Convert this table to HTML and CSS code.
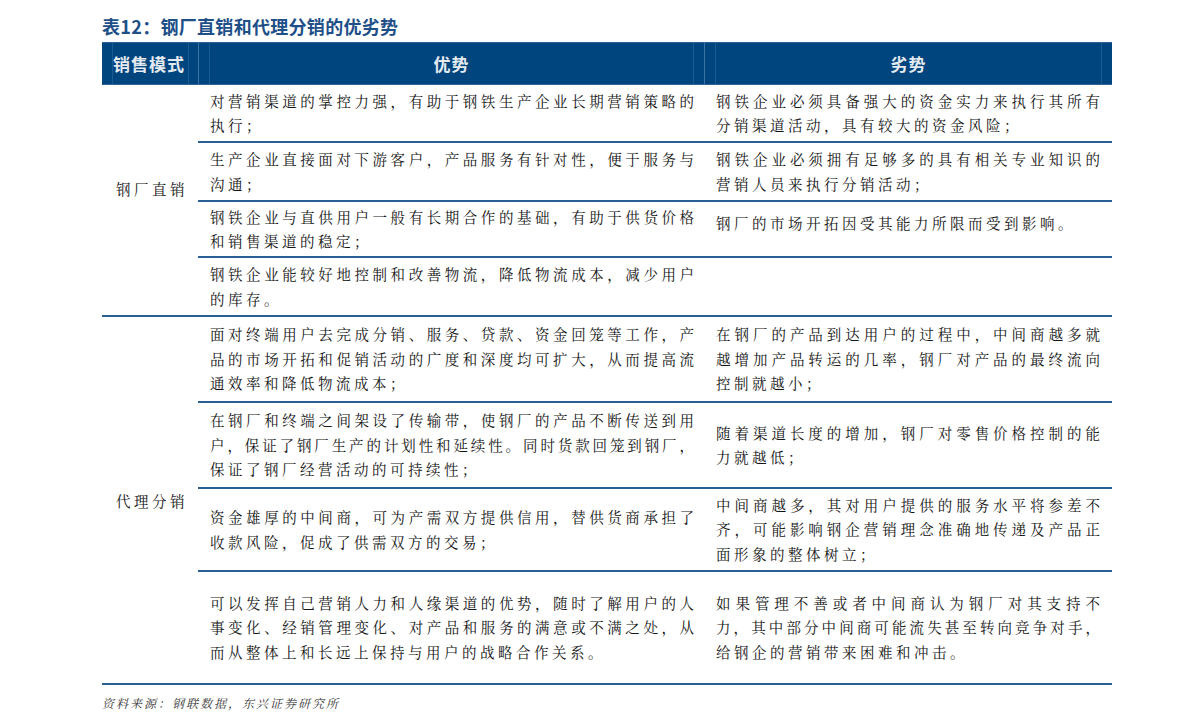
FILE: index.html
```html
<!DOCTYPE html>
<html lang="zh-CN">
<head>
<meta charset="utf-8">
<title>表12：钢厂直销和代理分销的优劣势</title>
<link rel="stylesheet" href="styles.css">
</head>
<body>
<div class="page">
  <div class="title">表12：钢厂直销和代理分销的优劣势</div>
  <div class="table">
    <div class="th th-mode"><span class="th-in">销售模式</span></div>
    <div class="th th-mid"><span class="th-in">优势</span></div>
    <div class="th th-mid"><span class="th-in">劣势</span></div>

    <div class="grp grp-1">钢厂直销</div>
    <div class="cell c2">
      <div class="f">对营销渠道的掌控力强，有助于钢铁生产企业长期营销策略的</div>
      <div class="l">执行；</div>
    </div>
    <div class="cell c3">
      <div class="f">钢铁企业必须具备强大的资金实力来执行其所有</div>
      <div class="l">分销渠道活动，具有较大的资金风险；</div>
    </div>
    <div class="cell c2">
      <div class="f">生产企业直接面对下游客户，产品服务有针对性，便于服务与</div>
      <div class="l">沟通；</div>
    </div>
    <div class="cell c3">
      <div class="f">钢铁企业必须拥有足够多的具有相关专业知识的</div>
      <div class="l">营销人员来执行分销活动；</div>
    </div>
    <div class="cell c2">
      <div class="f">钢铁企业与直供用户一般有长期合作的基础，有助于供货价格</div>
      <div class="l">和销售渠道的稳定；</div>
    </div>
    <div class="cell c3 up">
      <div class="l">钢厂的市场开拓因受其能力所限而受到影响。</div>
    </div>
    <div class="cell c2">
      <div class="f">钢铁企业能较好地控制和改善物流，降低物流成本，减少用户</div>
      <div class="l">的库存。</div>
    </div>
    <div class="cell c3"></div>

    <div class="grp grp-2">代理分销</div>
    <div class="cell c2">
      <div class="f">面对终端用户去完成分销、服务、贷款、资金回笼等工作，产</div>
      <div class="f">品的市场开拓和促销活动的广度和深度均可扩大，从而提高流</div>
      <div class="l">通效率和降低物流成本；</div>
    </div>
    <div class="cell c3">
      <div class="f">在钢厂的产品到达用户的过程中，中间商越多就</div>
      <div class="f">越增加产品转运的几率，钢厂对产品的最终流向</div>
      <div class="l">控制就越小；</div>
    </div>
    <div class="cell c2">
      <div class="f">在钢厂和终端之间架设了传输带，使钢厂的产品不断传送到用</div>
      <div class="f">户，保证了钢厂生产的计划性和延续性。同时货款回笼到钢厂，</div>
      <div class="l">保证了钢厂经营活动的可持续性；</div>
    </div>
    <div class="cell c3">
      <div class="f">随着渠道长度的增加，钢厂对零售价格控制的能</div>
      <div class="l">力就越低；</div>
    </div>
    <div class="cell c2">
      <div class="f">资金雄厚的中间商，可为产需双方提供信用，替供货商承担了</div>
      <div class="l">收款风险，促成了供需双方的交易；</div>
    </div>
    <div class="cell c3">
      <div class="f">中间商越多，其对用户提供的服务水平将参差不</div>
      <div class="f">齐，可能影响钢企营销理念准确地传递及产品正</div>
      <div class="l">面形象的整体树立；</div>
    </div>
    <div class="cell c2">
      <div class="f">可以发挥自己营销人力和人缘渠道的优势，随时了解用户的人</div>
      <div class="f">事变化、经销管理变化、对产品和服务的满意或不满之处，从</div>
      <div class="l">而从整体上和长远上保持与用户的战略合作关系。</div>
    </div>
    <div class="cell c3">
      <div class="f">如果管理不善或者中间商认为钢厂对其支持不</div>
      <div class="f">力，其中部分中间商可能流失甚至转向竞争对手，</div>
      <div class="l">给钢企的营销带来困难和冲击。</div>
    </div>
  </div>
  <div class="source">资料来源：钢联数据，东兴证券研究所</div>
</div>
</body>
</html>
```

FILE: styles.css
```css
html, body {
  margin: 0;
  padding: 0;
  background: #ffffff;
}

body {
  font-family: "Noto Serif CJK SC", "Noto Sans CJK SC", "Liberation Serif", serif;
  color: #151515;
}

.page {
  padding: 16px 0 0 102px;
  width: 1010px;
}

.title {
  font-family: "Noto Sans CJK SC", "Liberation Sans", sans-serif;
  font-weight: bold;
  font-size: 18px;
  letter-spacing: 0.3px;
  line-height: 20px;
  height: 26px;
  color: #1e4f88;
  white-space: nowrap;
}

.table {
  display: grid;
  grid-template-columns: 96px 506px 408px;
  grid-template-rows: 43px 58px 59px 56px 59px 86px 86px 83px 113px;
}

.th {
  background: #00457d;
  border-top: 1px solid #2c6499;
  border-bottom: 1px solid #2c6499;
  display: flex;
  align-items: stretch;
  padding: 0 10px;
  box-sizing: border-box;
}

.th + .th {
  border-left: 1px solid #3d72a5;
}

.th-mode {
  padding: 0 9px 0 10px;
}

.th-in {
  flex: 1;
  display: flex;
  align-items: center;
  border-left: 1px solid #1b5a92;
  border-right: 1px solid #1b5a92;
  font-family: "Noto Sans CJK SC", "Liberation Sans", sans-serif;
  font-weight: bold;
  font-size: 17px;
  letter-spacing: 1px;
  color: #e4eaf1;
  white-space: nowrap;
  overflow: visible;
}

.th-mid .th-in {
  justify-content: center;
}

.grp {
  grid-row: span 4;
  border-bottom: 2px solid #2a5f95;
  display: flex;
  align-items: center;
  justify-content: center;
  font-size: 14.5px;
  letter-spacing: 3.5px;
  padding-left: 4px;
  box-sizing: border-box;
}

.grp-1 {
  padding-bottom: 24px;
}

.cell {
  border-bottom: 2px solid #2a5f95;
  display: flex;
  flex-direction: column;
  justify-content: center;
  box-sizing: border-box;
  font-size: 14.5px;
  line-height: 24.5px;
  white-space: nowrap;
}

.c2 {
  padding: 0 10px 0 12px;
}

.c3 {
  padding: 0 12px 0 12px;
}

.up {
  padding-bottom: 12px;
}

.f {
  letter-spacing: 1.5px;
  text-align: justify;
  text-align-last: justify;
  margin-right: -1.5px;
}

.l {
  letter-spacing: 3.5px;
}

.source {
  margin-top: 10px;
  font-size: 12px;
  line-height: 16px;
  letter-spacing: 2px;
  font-style: italic;
  color: #333333;
}
```
